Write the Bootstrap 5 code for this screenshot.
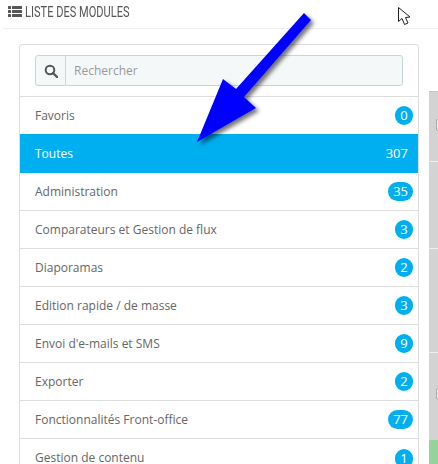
<!DOCTYPE html>
<html lang="fr">
<head>
<meta charset="utf-8">
<title>Liste des modules</title>
<link href="https://cdn.jsdelivr.net/npm/bootstrap@5.3.0/dist/css/bootstrap.min.css" rel="stylesheet">
<style>
html,body{height:464px;overflow:hidden;background:#fff}
body{font-family:"Open Sans","Liberation Sans",sans-serif;font-size:12px;color:#666;position:relative}
.top-bar{height:29px;margin-left:3px;padding:0 0 5px 5px;border-bottom:1px solid #eee;color:#555}
.top-title{font-family:"Roboto","Liberation Sans",sans-serif;font-size:14px;line-height:24px;display:inline-block;transform:scaleX(.79);transform-origin:left center;white-space:nowrap;margin-left:3px}
.main-row{padding-left:19px;padding-top:15px}
.mod-panel{width:400px;flex:none;border-radius:3px;border-color:#ddd;overflow:visible}
.search-zone{padding:10px 15px 9px 15px;height:52px;margin-bottom:-1px;border-bottom:1px solid #ddd}
.search-zone .input-group{height:31px}
.search-zone .input-group-text{width:31px;padding:0;justify-content:center;background:#f5f8f9;border-color:#c7d6db;border-radius:3px 0 0 3px}
.search-zone .form-control{background:#f5f8f9;border-color:#c7d6db;font-size:12px;border-radius:0 3px 3px 0;padding:4px 8px;color:#999;box-shadow:none}
.search-zone .form-control::placeholder{color:#999}
.mod-list .list-group-item{height:38px;padding:0 5px 0 15px;font-size:12px;color:#666;border-color:#ddd;border-width:0 0 1px 0;border-radius:0;display:flex;align-items:center;justify-content:space-between;background:#fff}
.mod-list .list-group-item.active{background:#00aff0;color:#fff;border-color:#00aff0;height:39px;margin-top:-1px;padding-right:10px}
.mod-list .active .count-plain{font-size:13px}
.count-pill{background:#00aff0;color:#fff;font-family:"Open Sans",sans-serif;font-size:13px;font-weight:400;line-height:19px;min-width:18px;height:19px;padding:0 5px;border-radius:10px;text-align:center}
.side-panel{flex:none;width:9px;margin-left:10px;margin-top:47px;height:373px;background:#d3d3d3;border-top:1px solid #a9cfe8;position:relative}
.side-line{height:1px;background:#eee}
.side-a{height:69px}.side-b{height:86px}.side-c{height:103px}.side-d{height:87px}
.side-green{flex:none;height:24px;background:#95d39b}
.side-knob{position:absolute;left:7px;width:4px;height:12px;border:1px solid #aaa;border-radius:2px 0 0 2px;background:#eee}
.overlay-art{position:absolute;left:0;top:0;z-index:5;pointer-events:none}
</style>
</head>
<body>
<div class="top-bar d-flex align-items-center">
  <svg width="14" height="11" viewBox="0 0 14 11" aria-hidden="true"><g fill="#555"><rect x="0" y="0" width="3" height="3" rx=".5"/><rect x="0" y="4" width="3" height="3" rx=".5"/><rect x="0" y="8" width="3" height="3" rx=".5"/><rect x="4" y="0" width="10" height="3" rx=".5"/><rect x="4" y="4" width="10" height="3" rx=".5"/><rect x="4" y="8" width="10" height="3" rx=".5"/></g></svg>
  <span class="top-title">LISTE DES MODULES</span>
</div>
<div class="main-row d-flex">
  <div class="card mod-panel">
    <div class="search-zone">
      <div class="input-group">
        <span class="input-group-text">
          <svg width="14" height="14" viewBox="0 0 14 14" aria-hidden="true"><circle cx="6" cy="6" r="4.3" fill="none" stroke="#555" stroke-width="2"/><path d="M9 9l4 4" stroke="#555" stroke-width="2.4" stroke-linecap="round"/></svg>
        </span>
        <input class="form-control" type="text" placeholder="Rechercher">
      </div>
    </div>
    <div class="list-group list-group-flush mod-list">
      <div class="list-group-item">Favoris<span class="count-pill">0</span></div>
      <div class="list-group-item active">Toutes<span class="count-plain">307</span></div>
      <div class="list-group-item">Administration<span class="count-pill">35</span></div>
      <div class="list-group-item">Comparateurs et Gestion de flux<span class="count-pill">3</span></div>
      <div class="list-group-item">Diaporamas<span class="count-pill">2</span></div>
      <div class="list-group-item">Edition rapide / de masse<span class="count-pill">3</span></div>
      <div class="list-group-item">Envoi d'e-mails et SMS<span class="count-pill">9</span></div>
      <div class="list-group-item">Exporter<span class="count-pill">2</span></div>
      <div class="list-group-item">Fonctionnalités Front-office<span class="count-pill">77</span></div>
      <div class="list-group-item">Gestion de contenu<span class="count-pill">1</span></div>
    </div>
  </div>
  <div class="side-panel d-flex flex-column">
    <div class="side-a"></div><div class="side-line"></div>
    <div class="side-b"></div><div class="side-line"></div>
    <div class="side-c"></div><div class="side-line"></div>
    <div class="side-d"></div>
    <div class="side-green"></div>
    <span class="side-knob" style="top:27px"></span>
    <span class="side-knob" style="top:296px"></span>
  </div>
</div>
<svg class="overlay-art" width="438" height="464" viewBox="0 0 438 464" aria-hidden="true">
  <defs><filter id="soft" x="-20%" y="-20%" width="150%" height="150%"><feDropShadow dx="3" dy="3" stdDeviation="2" flood-color="#000" flood-opacity=".55"/></filter></defs>
  <polygon points="304,13 311,20 244,97 256,108 197,142 223,79 236,89" fill="#0000ff" filter="url(#soft)"/>
  <path d="M398.5 7.5V21.5L402 18.5L404.5 24.5L408 23L405.5 17.5L410 17Z" fill="#fff" stroke="#222" stroke-width="1"/>
</svg>
<script src="https://cdn.jsdelivr.net/npm/bootstrap@5.3.0/dist/js/bootstrap.bundle.min.js"></script>
</body>
</html>
